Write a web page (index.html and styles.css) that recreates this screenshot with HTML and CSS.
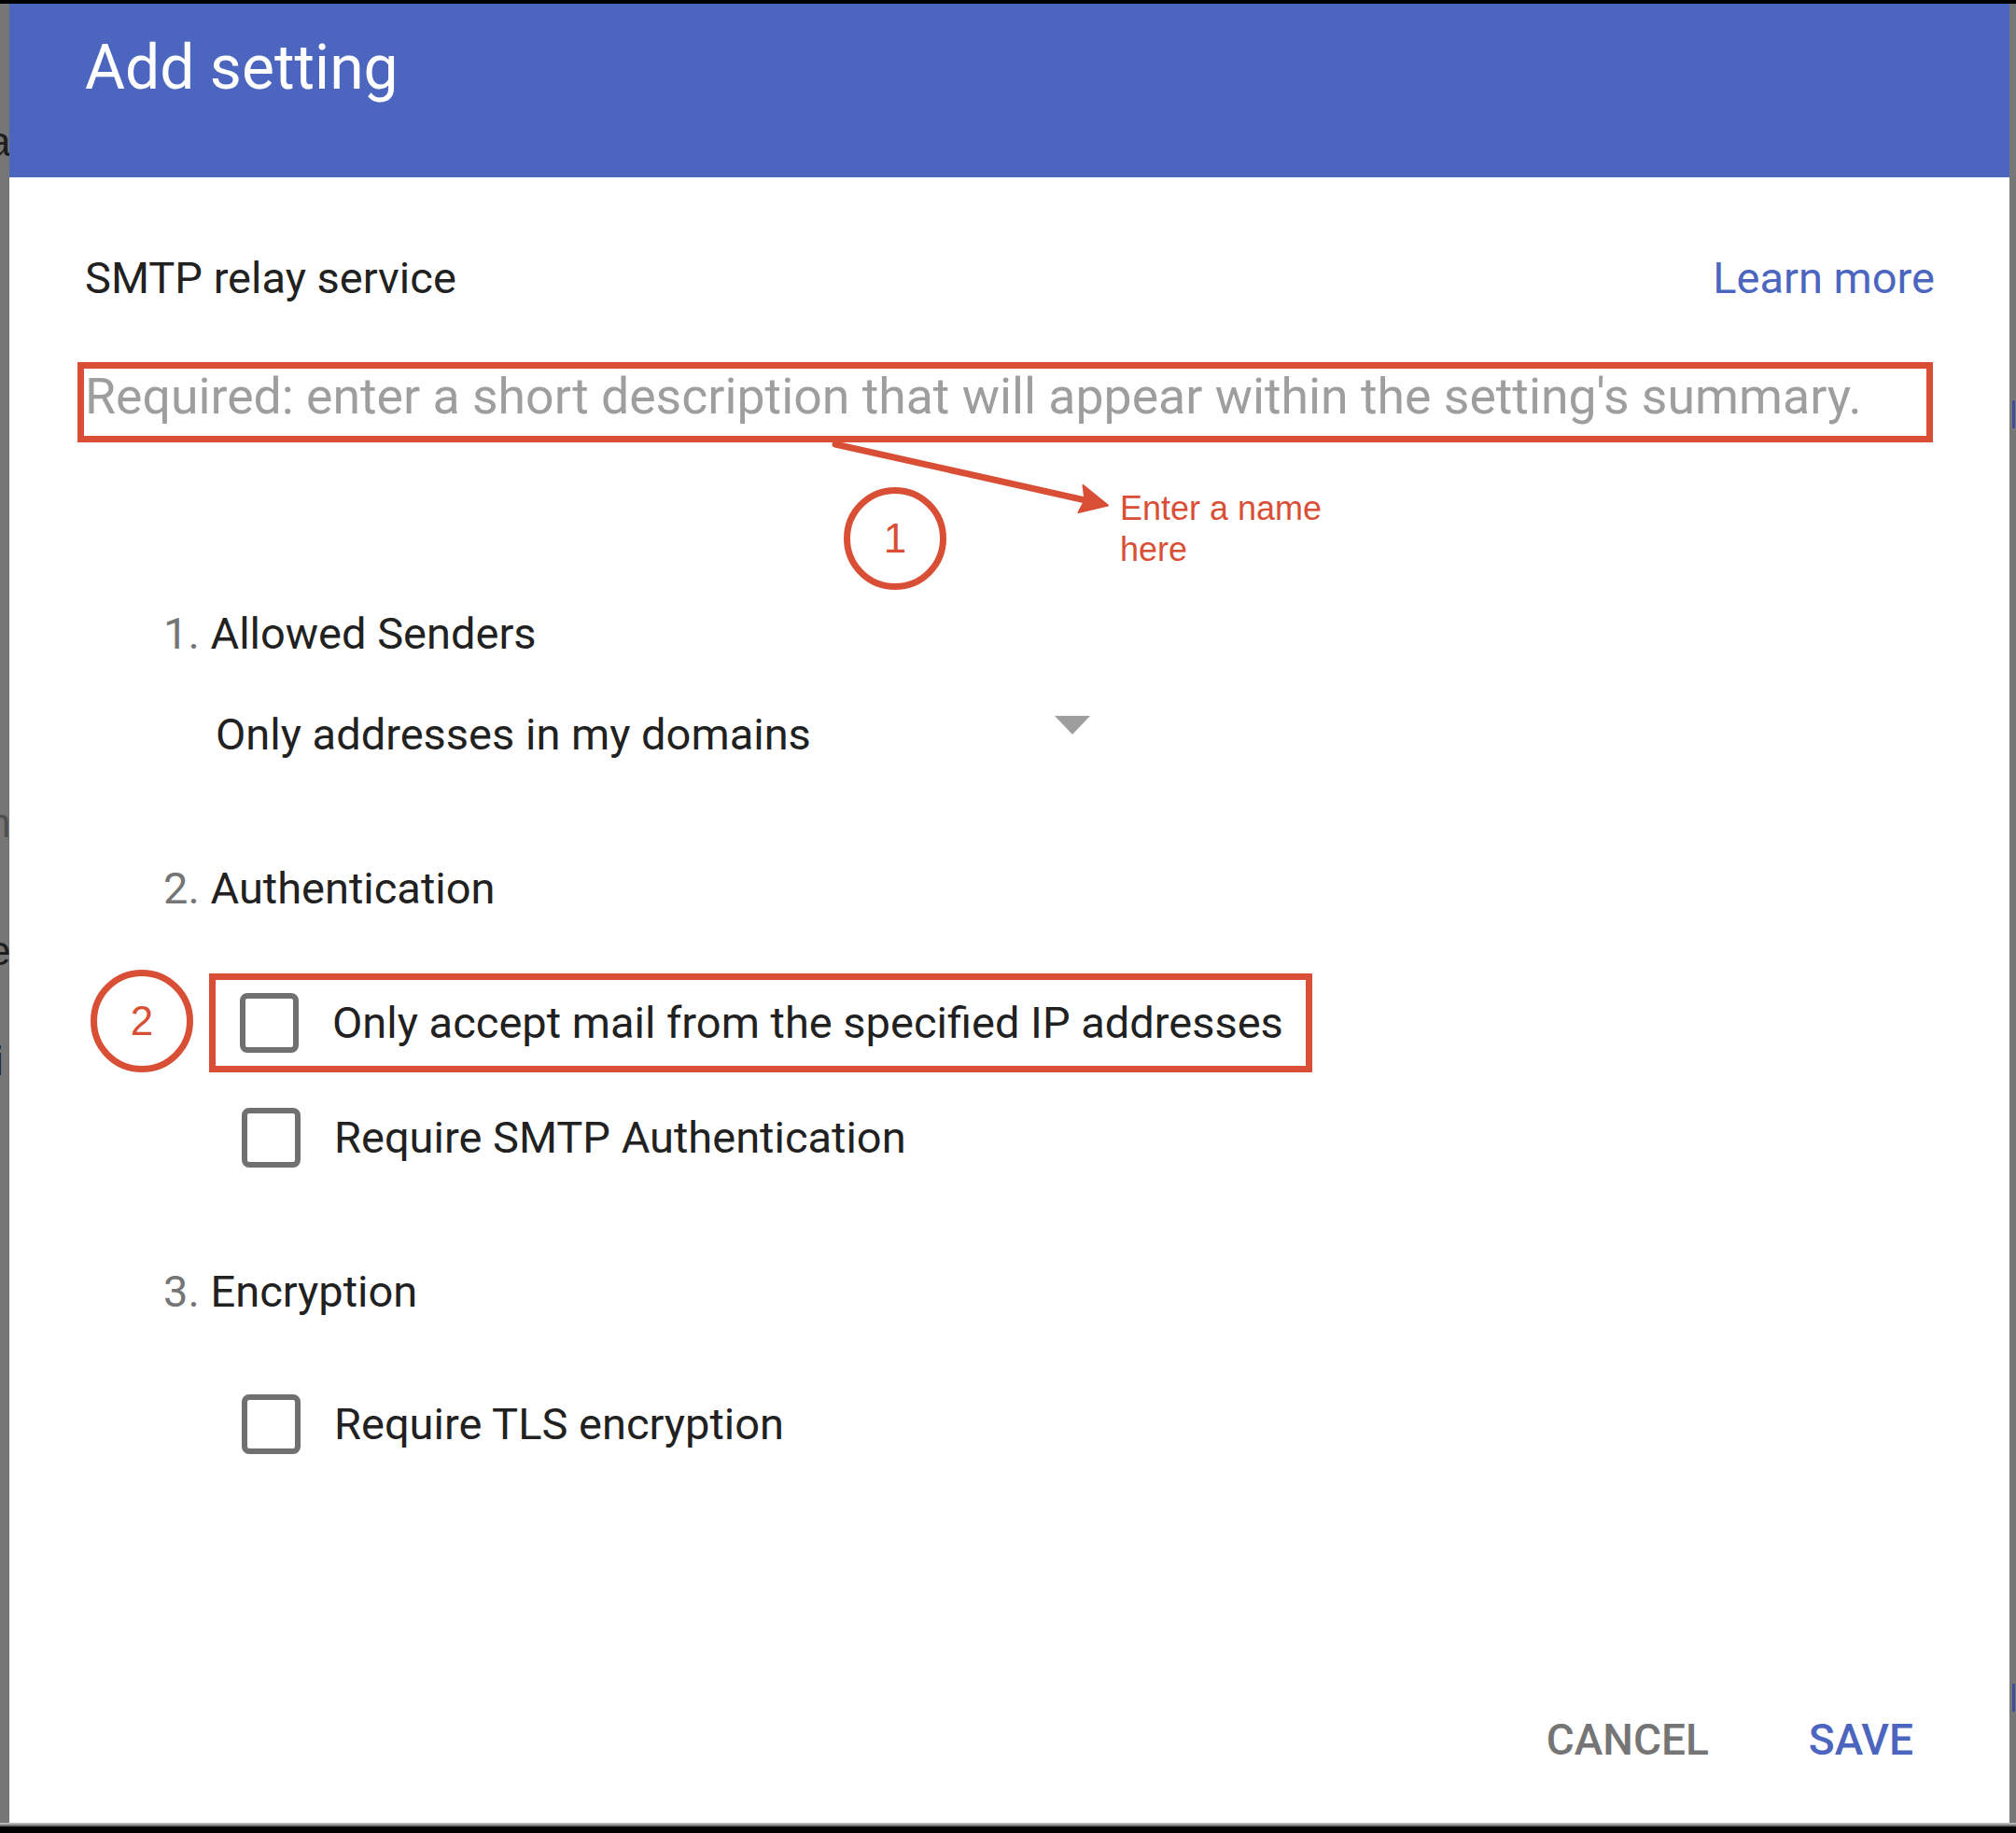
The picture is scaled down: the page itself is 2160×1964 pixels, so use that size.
FILE: index.html
```html
<!DOCTYPE html>
<html lang="en">
<head>
<meta charset="utf-8">
<title>Add setting</title>
<link rel="stylesheet" href="styles.css">
</head>
<body>
<div class="screen">
  <div class="topbar"></div>
  <div class="stage">
    <div class="backdrop-left">
      <span class="bd-letter l-a">a</span>
      <span class="bd-letter l-t">t</span>
      <span class="bd-letter l-n">n</span>
      <span class="bd-letter l-e">e</span>
      <span class="bd-letter l-i">i</span>
    </div>
    <div class="dialog">
      <div class="header">
        <div class="title">Add setting</div>
      </div>
      <div class="row-top">
        <span class="service">SMTP relay service</span>
        <a class="learn">Learn more</a>
      </div>
      <div class="mark-box desc-box">
        <span class="placeholder">Required: enter a short description that will appear within the setting's summary.</span>
      </div>
      <div class="annot1">
        <svg class="arrow" width="2143" height="176" viewBox="0 0 2143 176">
          <line x1="885" y1="2" x2="1150" y2="61.3" stroke="#d94f36" stroke-width="7" stroke-linecap="round"/>
          <polygon points="1177,67.5 1145.5,75 1152.5,62 1150.5,46" fill="#d94f36" stroke="#d94f36" stroke-width="2" stroke-linejoin="round"/>
        </svg>
        <div class="badge badge-1">1</div>
        <div class="note">Enter a name<br>here</div>
      </div>
      <div class="section s1"><span class="num">1.</span> Allowed Senders</div>
      <div class="dropdown">
        <span>Only addresses in my domains</span>
        <span class="caret"></span>
      </div>
      <div class="section s2"><span class="num">2.</span> Authentication</div>
      <div class="marked-row">
        <div class="badge badge-2">2</div>
        <div class="mark-box check-box-wrap">
          <span class="checkbox"></span>
          <span class="check-label">Only accept mail from the specified IP addresses</span>
        </div>
      </div>
      <div class="check-row r2">
        <span class="checkbox"></span>
        <span class="check-label">Require SMTP Authentication</span>
      </div>
      <div class="section s3"><span class="num">3.</span> Encryption</div>
      <div class="check-row r3">
        <span class="checkbox"></span>
        <span class="check-label">Require TLS encryption</span>
      </div>
      <div class="actions">
        <span class="btn cancel">CANCEL</span>
        <span class="btn save">SAVE</span>
      </div>
    </div>
    <div class="backdrop-right">
      <span class="bd-blue b1"></span>
      <span class="bd-blue b2"></span>
    </div>
  </div>
  <div class="bottombar"></div>
</div>
</body>
</html>
```

FILE: styles.css
```css
html, body {
  margin: 0;
  padding: 0;
  background: #000;
}

.screen {
  width: 2160px;
  height: 1964px;
  display: flex;
  flex-direction: column;
  background: #000;
}

.topbar {
  height: 4px;
  background: #000;
}

.stage {
  height: 1949px;
  display: flex;
}

.bottombar {
  height: 11px;
  box-sizing: border-box;
  border-top: 2px solid #b5b5b5;
  border-bottom: 7px solid #000;
  background: #707070;
}

/* page behind the dialog */
.backdrop-left {
  width: 10px;
  background: #767676;
  overflow: hidden;
  display: flex;
  flex-direction: column;
}

.bd-letter {
  font-family: "Liberation Sans", Arial, sans-serif;
  font-size: 44px;
  line-height: 44px;
  height: 44px;
  color: #1e1e1e;
  margin-left: -13px;
  flex: none;
}

.l-a { margin-top: 126px; }
.l-t { margin-top: 479px; }
.l-n { margin-top: 163px; color: #505050; }
.l-e { margin-top: 93px; }
.l-i { margin-top: 74px; margin-left: -6px; }

.backdrop-right {
  width: 7px;
  background: #777;
  display: flex;
  flex-direction: column;
}

.bd-blue {
  width: 3px;
  height: 30px;
  margin-left: 3px;
  background: #3e4f9a;
}

.b1 { margin-top: 425px; }
.b2 { margin-top: 1345px; }

/* dialog */
.dialog {
  flex: 1;
  background: #fff;
  display: flex;
  flex-direction: column;
  font-family: Roboto, "Noto Sans", Arial, sans-serif;
  color: #212121;
  font-size: 47px;
}

.header {
  height: 186px;
  box-sizing: border-box;
  background: #4c66c0;
  padding: 36px 0 0 81px;
}

.title {
  color: #fff;
  font-size: 66px;
  line-height: 66px;
  font-weight: 400;
}

.row-top {
  margin-top: 78px;
  height: 60px;
  line-height: 60px;
  display: flex;
  justify-content: space-between;
  padding: 0 80px 0 81px;
}

.learn {
  color: #4c66c0;
  text-decoration: none;
}

.mark-box {
  border: 7px solid #d94f36;
  box-sizing: border-box;
}

.desc-box {
  margin: 60px 82px 0 73px;
  height: 86px;
  padding: 0 0 0 1px;
  line-height: 60px;
  white-space: nowrap;
  overflow: hidden;
}

.placeholder {
  font-size: 53.6px;
  color: #9e9e9e;
}

.annot1 {
  position: relative;
  height: 175px;
}

.arrow {
  position: absolute;
  left: 0;
  top: 0;
}

.badge {
  width: 110px;
  height: 110px;
  box-sizing: border-box;
  border: 7px solid #d94f36;
  border-radius: 50%;
  display: flex;
  align-items: center;
  justify-content: center;
  color: #d94f36;
  font-family: "Liberation Sans", Arial, sans-serif;
  font-size: 44px;
  flex: none;
}

.badge-1 {
  position: absolute;
  left: 894px;
  top: 48px;
}

.note {
  position: absolute;
  left: 1190px;
  top: 49px;
  font-family: "Liberation Sans", Arial, sans-serif;
  font-size: 36px;
  line-height: 44px;
  color: #d94f36;
  white-space: nowrap;
}

.section {
  height: 60px;
  line-height: 60px;
  padding-left: 165px;
}

.num {
  color: #757575;
}

.s1 { margin-top: 0; }
.s2 { margin-top: 105px; }
.s3 { margin-top: 103px; }

.dropdown {
  margin: 48px 0 0 221px;
  width: 937px;
  height: 60px;
  line-height: 60px;
  display: flex;
  justify-content: space-between;
}

.caret {
  width: 0;
  height: 0;
  margin-top: 10px;
  border-left: 19px solid transparent;
  border-right: 19px solid transparent;
  border-top: 20px solid #9e9e9e;
}

.marked-row {
  margin-top: 57px;
  display: flex;
  align-items: flex-start;
  padding-left: 87px;
}

.check-box-wrap {
  margin: 4px 0 0 17px;
  width: 1182px;
  height: 106px;
  display: flex;
  align-items: center;
  padding-left: 26px;
}

.checkbox {
  width: 63px;
  height: 64px;
  box-sizing: border-box;
  border: 6px solid #707070;
  border-radius: 8px;
  flex: none;
}

.check-label {
  margin-left: 36px;
  line-height: 60px;
  white-space: nowrap;
}

.check-row {
  height: 64px;
  display: flex;
  align-items: center;
  padding-left: 249px;
}

.r2 { margin-top: 38px; }
.r3 { margin-top: 80px; }

.actions {
  margin-top: auto;
  margin-bottom: 59px;
  height: 60px;
  line-height: 60px;
  display: flex;
  justify-content: flex-end;
  padding-right: 103px;
  gap: 107px;
  font-size: 46px;
  font-weight: 500;
}

.cancel { color: #757575; }
.save { color: #4c66c0; }
```
